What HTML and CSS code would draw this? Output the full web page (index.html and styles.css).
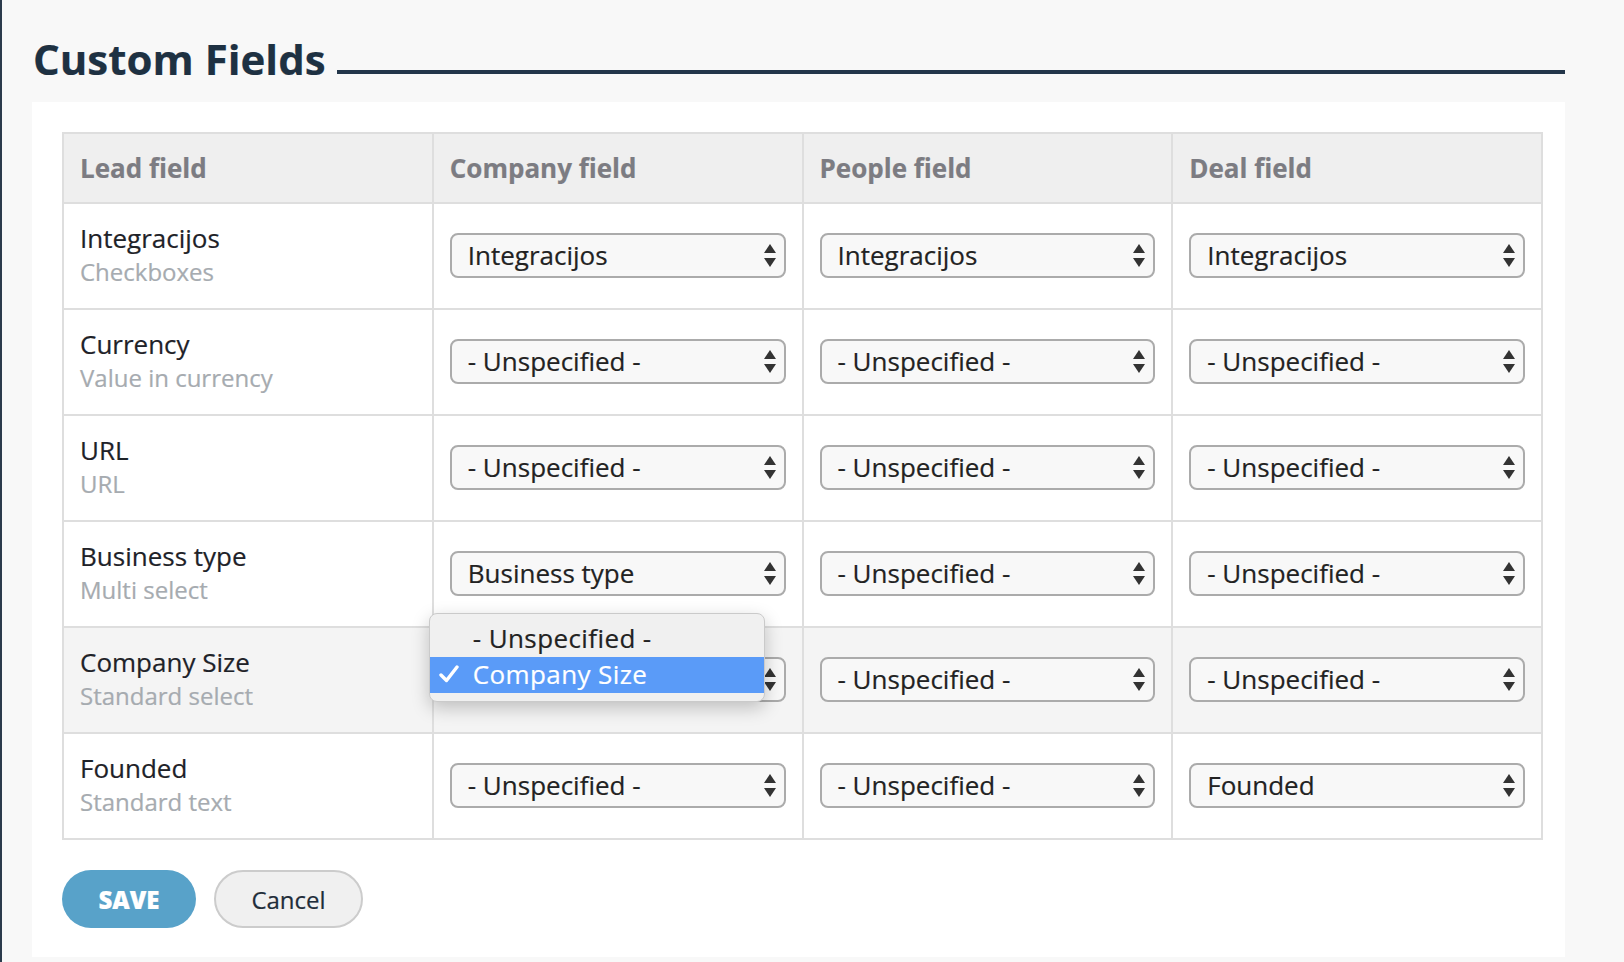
FILE: index.html
```html
<!DOCTYPE html>
<html lang="en">
<head>
<meta charset="utf-8">
<title>Custom Fields</title>
<link rel="stylesheet" href="styles.css">
</head>
<body>
<div class="page">
  <div class="title-row">
    <h1 class="title">Custom Fields</h1>
    <div class="title-rule"></div>
  </div>
  <div class="panel">
    <table class="fields">
      <colgroup><col><col><col><col></colgroup>
      <thead>
        <tr><th>Lead field</th><th>Company field</th><th>People field</th><th>Deal field</th></tr>
      </thead>
      <tbody>
        <tr>
          <td><div class="name">Integracijos</div><div class="type">Checkboxes</div></td>
          <td><div class="select"><span>Integracijos</span><svg class="arrows" viewBox="0 0 12 23" width="12" height="23"><polygon points="6,0 12,9 0,9"/><polygon points="0,14 12,14 6,23"/></svg></div></td>
          <td><div class="select"><span>Integracijos</span><svg class="arrows" viewBox="0 0 12 23" width="12" height="23"><polygon points="6,0 12,9 0,9"/><polygon points="0,14 12,14 6,23"/></svg></div></td>
          <td><div class="select"><span>Integracijos</span><svg class="arrows" viewBox="0 0 12 23" width="12" height="23"><polygon points="6,0 12,9 0,9"/><polygon points="0,14 12,14 6,23"/></svg></div></td>
        </tr>
        <tr>
          <td><div class="name">Currency</div><div class="type">Value in currency</div></td>
          <td><div class="select"><span>- Unspecified -</span><svg class="arrows" viewBox="0 0 12 23" width="12" height="23"><polygon points="6,0 12,9 0,9"/><polygon points="0,14 12,14 6,23"/></svg></div></td>
          <td><div class="select"><span>- Unspecified -</span><svg class="arrows" viewBox="0 0 12 23" width="12" height="23"><polygon points="6,0 12,9 0,9"/><polygon points="0,14 12,14 6,23"/></svg></div></td>
          <td><div class="select"><span>- Unspecified -</span><svg class="arrows" viewBox="0 0 12 23" width="12" height="23"><polygon points="6,0 12,9 0,9"/><polygon points="0,14 12,14 6,23"/></svg></div></td>
        </tr>
        <tr>
          <td><div class="name">URL</div><div class="type">URL</div></td>
          <td><div class="select"><span>- Unspecified -</span><svg class="arrows" viewBox="0 0 12 23" width="12" height="23"><polygon points="6,0 12,9 0,9"/><polygon points="0,14 12,14 6,23"/></svg></div></td>
          <td><div class="select"><span>- Unspecified -</span><svg class="arrows" viewBox="0 0 12 23" width="12" height="23"><polygon points="6,0 12,9 0,9"/><polygon points="0,14 12,14 6,23"/></svg></div></td>
          <td><div class="select"><span>- Unspecified -</span><svg class="arrows" viewBox="0 0 12 23" width="12" height="23"><polygon points="6,0 12,9 0,9"/><polygon points="0,14 12,14 6,23"/></svg></div></td>
        </tr>
        <tr>
          <td><div class="name">Business type</div><div class="type">Multi select</div></td>
          <td><div class="select"><span>Business type</span><svg class="arrows" viewBox="0 0 12 23" width="12" height="23"><polygon points="6,0 12,9 0,9"/><polygon points="0,14 12,14 6,23"/></svg></div></td>
          <td><div class="select"><span>- Unspecified -</span><svg class="arrows" viewBox="0 0 12 23" width="12" height="23"><polygon points="6,0 12,9 0,9"/><polygon points="0,14 12,14 6,23"/></svg></div></td>
          <td><div class="select"><span>- Unspecified -</span><svg class="arrows" viewBox="0 0 12 23" width="12" height="23"><polygon points="6,0 12,9 0,9"/><polygon points="0,14 12,14 6,23"/></svg></div></td>
        </tr>
        <tr class="hover">
          <td><div class="name">Company Size</div><div class="type">Standard select</div></td>
          <td>
            <div class="select-wrap">
              <div class="select"><span class="covered">Company Size</span><svg class="arrows" viewBox="0 0 12 23" width="12" height="23"><polygon points="6,0 12,9 0,9"/><polygon points="0,14 12,14 6,23"/></svg></div>
              <div class="menu">
                <div class="menu-item"><span class="check"></span><span>- Unspecified -</span></div>
                <div class="menu-item selected"><span class="check"><svg viewBox="0 0 20 18" width="20" height="18"><polyline points="2,10 7.5,15.5 18,2"/></svg></span><span>Company Size</span></div>
              </div>
            </div>
          </td>
          <td><div class="select"><span>- Unspecified -</span><svg class="arrows" viewBox="0 0 12 23" width="12" height="23"><polygon points="6,0 12,9 0,9"/><polygon points="0,14 12,14 6,23"/></svg></div></td>
          <td><div class="select"><span>- Unspecified -</span><svg class="arrows" viewBox="0 0 12 23" width="12" height="23"><polygon points="6,0 12,9 0,9"/><polygon points="0,14 12,14 6,23"/></svg></div></td>
        </tr>
        <tr>
          <td><div class="name">Founded</div><div class="type">Standard text</div></td>
          <td><div class="select"><span>- Unspecified -</span><svg class="arrows" viewBox="0 0 12 23" width="12" height="23"><polygon points="6,0 12,9 0,9"/><polygon points="0,14 12,14 6,23"/></svg></div></td>
          <td><div class="select"><span>- Unspecified -</span><svg class="arrows" viewBox="0 0 12 23" width="12" height="23"><polygon points="6,0 12,9 0,9"/><polygon points="0,14 12,14 6,23"/></svg></div></td>
          <td><div class="select"><span>Founded</span><svg class="arrows" viewBox="0 0 12 23" width="12" height="23"><polygon points="6,0 12,9 0,9"/><polygon points="0,14 12,14 6,23"/></svg></div></td>
        </tr>
      </tbody>
    </table>
    <div class="actions">
      <button class="btn btn-save">SAVE</button>
      <button class="btn btn-cancel">Cancel</button>
    </div>
  </div>
</div>
</body>
</html>
```

FILE: styles.css
```css
* { box-sizing: border-box; }

html, body {
  height: 100%;
}

body {
  margin: 0;
  background: #f8f8f8;
  border-left: 2px solid #2b3b4c;
  font-family: "Open Sans", "DejaVu Sans", sans-serif;
  color: #222;
  overflow: hidden;
  -webkit-text-stroke: 0.2px currentColor;
}

.page {
  width: 1533px;
  margin-left: 30px;
  padding-top: 34px;
}

.title-row {
  display: flex;
  align-items: flex-end;
  gap: 11px;
  padding-left: 1px;
}

.title {
  margin: 0;
  font-size: 42px;
  line-height: 49px;
  font-weight: 700;
  color: #1e3142;
  white-space: nowrap;
}

.title-rule {
  flex: 1;
  height: 4px;
  background: #23364a;
  margin-bottom: 9px;
}

.panel {
  margin-top: 19px;
  background: #fff;
  padding: 30px 22px 29px 30px;
}

.fields {
  width: 1481px;
  border-collapse: collapse;
  table-layout: fixed;
}

.fields th,
.fields td {
  border: 2px solid #dedede;
  padding: 0 16px;
  text-align: left;
  vertical-align: middle;
}

.fields th {
  height: 70px;
  background: #efefef;
  font-size: 26px;
  font-weight: 700;
  color: #7c7c82;
}

.fields td {
  height: 106px;
}

.fields tr.hover td {
  background: #f4f4f4;
}

.name {
  font-size: 26px;
  line-height: 34px;
  color: #1e2228;
}

.type {
  font-size: 24px;
  line-height: 34px;
  color: #a6abb0;
  margin-bottom: 2px;
}

.select {
  display: flex;
  align-items: center;
  justify-content: space-between;
  height: 45px;
  margin-bottom: 2px;
  border: 2px solid #ababab;
  border-radius: 8px;
  background: #f8f8f8;
  padding: 0 8px 0 16px;
  font-size: 26px;
  color: #222;
  white-space: nowrap;
}

.arrows {
  display: block;
  fill: #333;
  flex: none;
}

.select-wrap {
  position: relative;
}

.covered {
  visibility: hidden;
}

.menu {
  position: absolute;
  left: -21px;
  top: -44px;
  width: 336px;
  padding: 7px 0 8px;
  background: #f0f0f0;
  border: 1px solid #cacaca;
  border-radius: 8px;
  box-shadow: 0 6px 18px rgba(0, 0, 0, 0.22);
  font-size: 26px;
  letter-spacing: 0.4px;
  color: #222;
  overflow: hidden;
}

.menu-item {
  display: flex;
  align-items: center;
  height: 36px;
  padding-left: 9px;
  padding-bottom: 2px;
  white-space: nowrap;
}

.menu-item.selected {
  background: #5a9bf8;
  color: #fff;
}

.check {
  width: 34px;
  flex: none;
  display: flex;
  align-items: center;
}

.check svg {
  display: block;
  fill: none;
  stroke: #fff;
  stroke-width: 3.4;
  stroke-linecap: round;
  stroke-linejoin: round;
}

.actions {
  display: flex;
  gap: 18px;
  margin-top: 30px;
}

.btn {
  height: 58px;
  border-radius: 29px;
  font-family: "Open Sans", "DejaVu Sans", sans-serif;
  font-size: 24px;
  cursor: pointer;
}

.btn-save {
  width: 134px;
  border: none;
  background: #58a2c9;
  color: #fff;
  font-weight: 800;
}

.btn-cancel {
  width: 149px;
  border: 2px solid #cccccc;
  background: #f0f0f0;
  color: #1f2d3a;
}
```
